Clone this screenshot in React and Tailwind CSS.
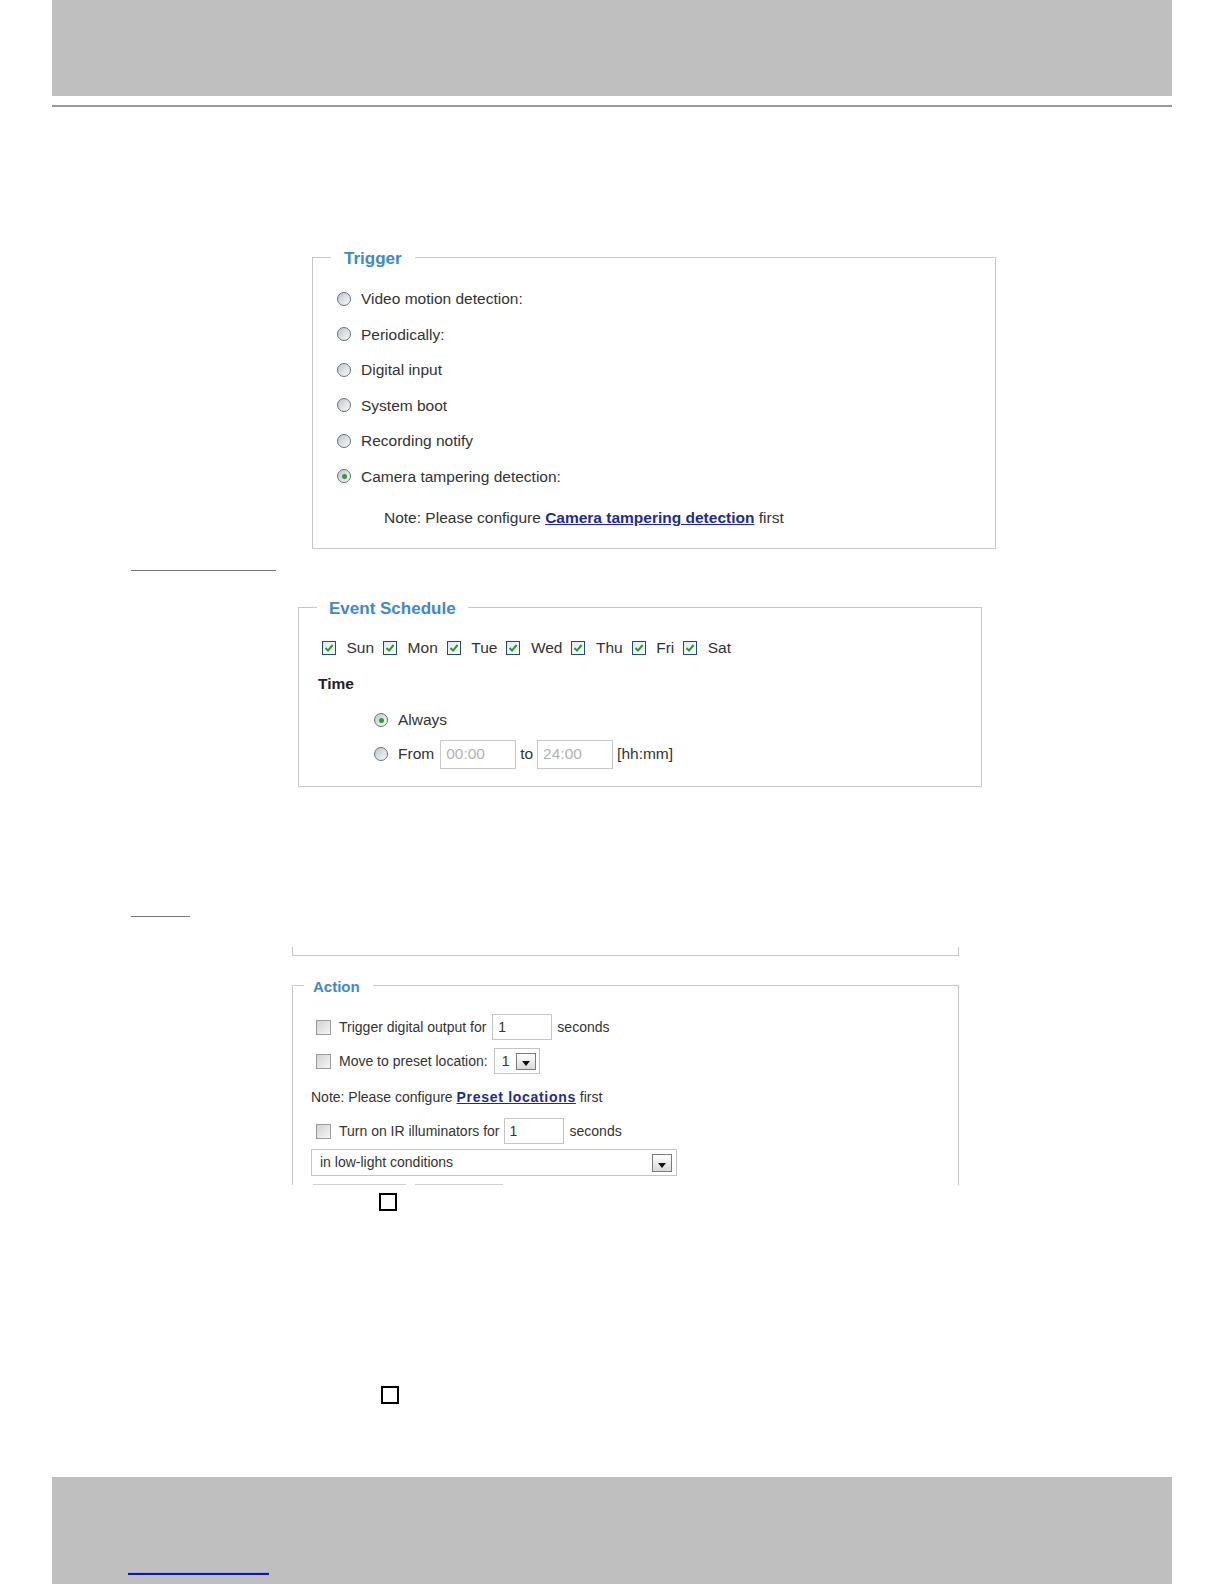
import React from 'react';

const FONT = "font-['Liberation_Sans',Arial,sans-serif]";

const Radio = ({ checked }) => (
  <span className="block w-[14px] h-[14px] shrink-0 rounded-full border border-[#66727f] bg-linear-to-br from-[#c0c5cc] to-[#fafafa] flex items-center justify-center">
    {checked && <span className="block w-[5px] h-[5px] rounded-full bg-[#2c9f2c]" />}
  </span>
);

const DayBox = () => (
  <span className="flex w-[14px] h-[14px] shrink-0 border border-[#1f4e79] bg-linear-to-br from-[#e4e8ec] to-white items-center justify-center">
    <svg width="10" height="10" viewBox="0 0 10 10">
      <path d="M1.5 5 L4 7.6 L8.6 2" fill="none" stroke="#20a020" strokeWidth="2" />
    </svg>
  </span>
);

const GrayBox = () => (
  <span className="block w-[15px] h-[15px] shrink-0 border border-[#9c9c9c] bg-linear-to-br from-[#d2d2d2] to-[#f6f6f6]" />
);

const DropBtn = ({ className }) => (
  <span className={`border border-[#7b7b7b] bg-linear-to-b from-white to-[#d9d9d9] flex items-end justify-center pb-[3px] ${className}`}>
    <svg width="8" height="5" viewBox="0 0 8 5">
      <path d="M0 0 H8 L4 5 Z" fill="#111" />
    </svg>
  </span>
);

const Legend = ({ className, children }) => (
  <legend className={`font-bold text-[#3d88d3] ${className}`}>
    <span className="relative top-[2px]">{children}</span>
  </legend>
);

const triggers = [
  'Video motion detection:',
  'Periodically:',
  'Digital input',
  'System boot',
  'Recording notify',
  'Camera tampering detection:',
];

const days = ['Sun', 'Mon', 'Tue', 'Wed', 'Thu', 'Fri', 'Sat'];

export default function App() {
  return (
    <div className={`w-[1224px] h-[1584px] bg-white flex flex-col items-start overflow-hidden text-[#333] ${FONT}`}>
      {/* header band */}
      <div className="ml-[52px] w-[1120px] h-[96px] bg-[#bfbfbf]" />
      <div className="ml-[52px] mt-[9px] w-[1120px] h-[2px] bg-[#9a9a9a]" />

      {/* Trigger */}
      <fieldset className="ml-[312px] mt-[140px] w-[684px] border border-[#c8c8c8] p-0 m-0">
        <Legend className="ml-[18px] px-[13px] text-[17px] leading-[20px]">Trigger</Legend>
        <div className="pt-[14px] pb-[18px] pl-[24px] text-[15.5px]">
          {triggers.map((t, i) => (
            <div key={t} className="h-[35.5px] flex items-center gap-[10px]">
              <Radio checked={i === 5} />
              <span>{t}</span>
            </div>
          ))}
          <div className="mt-[12px] h-[24px] flex items-center pl-[47px] whitespace-pre">
            <span>Note: Please configure </span>
            <a className="font-bold text-[#1e2a9c] underline">Camera tampering detection</a>
            <span> first</span>
          </div>
        </div>
      </fieldset>

      <div className="ml-[131px] mt-[21px] w-[145px] h-px bg-[#777]" />

      {/* Event Schedule */}
      <fieldset className="ml-[298px] mt-[26px] w-[684px] border border-[#c8c8c8] p-0 m-0">
        <Legend className="ml-[18px] px-[12px] text-[17px] leading-[20px]">Event Schedule</Legend>
        <div className="pt-[20px] pb-[15px] pl-[19px] text-[15.5px]">
          <div className="h-[22px] ml-[4px] flex items-center gap-[9px]">
            {days.map((d) => (
              <span key={d} className="flex items-center">
                <DayBox />
                <span className="ml-[10.5px]">{d}</span>
              </span>
            ))}
          </div>
          <div className="mt-[14px] h-[22px] flex items-center font-bold text-[#222]">Time</div>
          <div className="mt-[8px] ml-[56px]">
            <div className="h-[34px] flex items-center gap-[10px]">
              <Radio checked />
              <span>Always</span>
            </div>
            <div className="h-[34px] flex items-center">
              <Radio />
              <span className="ml-[10px]">From</span>
              <span className="ml-[6px] w-[76px] h-[29px] border border-[#c8c8c8] pl-[5px] flex items-center text-[#b3b3b3]">00:00</span>
              <span className="ml-[4px]">to</span>
              <span className="ml-[4px] w-[76px] h-[29px] border border-[#c8c8c8] pl-[5px] flex items-center text-[#b3b3b3]">24:00</span>
              <span className="ml-[4px]">[hh:mm]</span>
            </div>
          </div>
        </div>
      </fieldset>

      <div className="ml-[131px] mt-[129px] w-[59px] h-px bg-[#777]" />

      {/* cut-off bottom of previous panel */}
      <div className="ml-[292px] mt-[30px] w-[667px] h-[9px] border-l border-r border-b border-[#c8c8c8]" />

      {/* Action (cropped) */}
      <div className="ml-[292px] mt-[20px] w-[667px] h-[209px] overflow-hidden">
        <fieldset className="w-[667px] border border-[#c8c8c8] p-0 m-0">
          <Legend className="ml-[11px] pl-[9px] pr-[13px] text-[15px] leading-[18px]">Action</Legend>
          <div className="pt-[16px] pb-[40px] pl-[18px] text-[14px]">
            <div className="h-[34px] flex items-center">
              <span className="ml-[5px]"><GrayBox /></span>
              <span className="ml-[8px]">Trigger digital output for</span>
              <span className="ml-[6px] w-[60px] h-[26px] border border-[#c4c4c4] pl-[5px] flex items-center">1</span>
              <span className="ml-[5px]">seconds</span>
            </div>
            <div className="h-[34px] flex items-center">
              <span className="ml-[5px]"><GrayBox /></span>
              <span className="ml-[8px]">Move to preset location:</span>
              <span className="ml-[6px] w-[46px] h-[26px] border border-[#c4c4c4] pl-[7px] pr-[3px] flex items-center justify-between">
                <span>1</span>
                <DropBtn className="w-[20px] h-[17px]" />
              </span>
            </div>
            <div className="h-[36px] pt-[2px] flex items-center whitespace-pre">
              <span>Note: Please configure </span>
              <a className="font-bold text-[#1e2a9c] underline tracking-[0.7px]">Preset locations</a>
              <span> first</span>
            </div>
            <div className="h-[34px] flex items-center">
              <span className="ml-[5px]"><GrayBox /></span>
              <span className="ml-[8px]">Turn on IR illuminators for</span>
              <span className="ml-[4px] w-[60px] h-[26px] border border-[#c4c4c4] pl-[5px] flex items-center">1</span>
              <span className="ml-[6px]">seconds</span>
            </div>
            <div className="mt-[1px] w-[366px] h-[27px] border border-[#c4c4c4] pl-[8px] pr-[4px] flex items-center justify-between">
              <span>in low-light conditions</span>
              <DropBtn className="w-[20px] h-[18px]" />
            </div>
            <div className="mt-[8px] ml-[2px] flex gap-[9px]">
              <span className="w-[93px] h-[26px] border border-[#d0d0d0] bg-[#f4f4f4]" />
              <span className="w-[88px] h-[26px] border border-[#d0d0d0] bg-[#f4f4f4]" />
            </div>
          </div>
        </fieldset>
      </div>

      <div className="ml-[379px] mt-[8px] w-[18px] h-[18px] border-2 border-black" />
      <div className="ml-[381px] mt-[175px] w-[18px] h-[18px] border-2 border-black" />

      {/* footer band */}
      <div className="ml-[52px] mt-[73px] w-[1120px] h-[107px] bg-[#bfbfbf] pt-[96px] pl-[76px]">
        <div className="w-[141px] h-[2px] bg-[#1a1a8e] shadow-[0_-1px_0_#9aa6f0]" />
      </div>
    </div>
  );
}
